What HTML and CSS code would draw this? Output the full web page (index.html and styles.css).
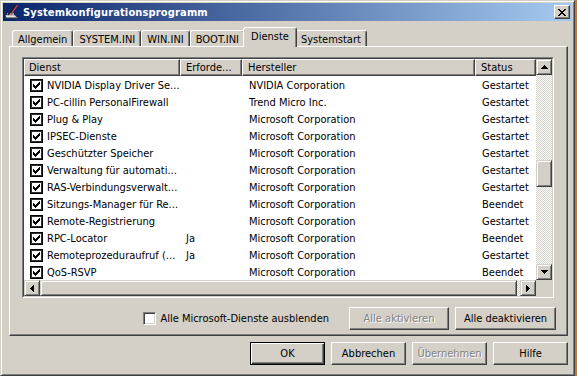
FILE: index.html
```html
<!DOCTYPE html>
<html lang="de">
<head>
<meta charset="utf-8">
<title>Systemkonfigurationsprogramm</title>
<link rel="stylesheet" href="styles.css">
</head>
<body>
<div class="page">
  <div class="window">
    <div class="caption">
      <svg class="appicon" viewBox="0 0 16 16" width="16" height="16">
        <path d="M1 11h10l3 3H2z" fill="#c8c8c8" stroke="#404040" stroke-width="1"/>
        <path d="M3 9h7v2H3z" fill="#9a9a9a"/>
        <path d="M4 11L11 1" stroke="#202020" stroke-width="1.6"/>
        <path d="M6.5 11L13.5 1" stroke="#e83a5a" stroke-width="1.2"/>
        <path d="M2 12h9" stroke="#fff" stroke-width="1"/>
      </svg>
      <span class="title">Systemkonfigurationsprogramm</span>
      <div class="capbtn">
        <svg class="px" viewBox="0 0 8 7" width="8" height="7"><path d="M0 0h2v1h-2zM6 0h2v1h-2zM1 1h2v1h-2zM5 1h2v1h-2zM2 2h4v1h-4zM3 3h2v1h-2zM2 4h4v1h-4zM1 5h2v1h-2zM5 5h2v1h-2zM0 6h2v1h-2zM6 6h2v1h-2z"/></svg>
      </div>
    </div>
    <div class="content">
      <div class="tabs">
        <div class="tab">Allgemein</div>
        <div class="tab">SYSTEM.INI</div>
        <div class="tab">WIN.INI</div>
        <div class="tab">BOOT.INI</div>
        <div class="tab active">Dienste</div>
        <div class="tab">Systemstart</div>
      </div>
      <div class="panel">
        <div class="listbox">
          <div class="listbox-inner">
            <div class="listgrid">
              <div class="table">
                <div class="thead">
                  <div class="th c1">Dienst</div>
                  <div class="th c2">Erforde...</div>
                  <div class="th c3">Hersteller</div>
                  <div class="th c4">Status</div>
                </div>
                <div class="row"><div class="td c1"><span class="lchk"><svg class="px" viewBox="0 0 7 7" width="7" height="7"><path d="M6 0h1v1h-1zM5 1h2v1h-2zM0 2h1v1h-1zM4 2h3v1h-3zM0 3h2v1h-2zM3 3h3v1h-3zM0 4h5v1h-5zM1 5h3v1h-3zM2 6h1v1h-1z"/></svg></span>NVIDIA Display Driver Se...</div><div class="td c2"></div><div class="td c3">NVIDIA Corporation</div><div class="td c4">Gestartet</div></div>
                <div class="row"><div class="td c1"><span class="lchk"><svg class="px" viewBox="0 0 7 7" width="7" height="7"><path d="M6 0h1v1h-1zM5 1h2v1h-2zM0 2h1v1h-1zM4 2h3v1h-3zM0 3h2v1h-2zM3 3h3v1h-3zM0 4h5v1h-5zM1 5h3v1h-3zM2 6h1v1h-1z"/></svg></span>PC-cillin PersonalFirewall</div><div class="td c2"></div><div class="td c3">Trend Micro Inc.</div><div class="td c4">Gestartet</div></div>
                <div class="row"><div class="td c1"><span class="lchk"><svg class="px" viewBox="0 0 7 7" width="7" height="7"><path d="M6 0h1v1h-1zM5 1h2v1h-2zM0 2h1v1h-1zM4 2h3v1h-3zM0 3h2v1h-2zM3 3h3v1h-3zM0 4h5v1h-5zM1 5h3v1h-3zM2 6h1v1h-1z"/></svg></span>Plug &amp; Play</div><div class="td c2"></div><div class="td c3">Microsoft Corporation</div><div class="td c4">Gestartet</div></div>
                <div class="row"><div class="td c1"><span class="lchk"><svg class="px" viewBox="0 0 7 7" width="7" height="7"><path d="M6 0h1v1h-1zM5 1h2v1h-2zM0 2h1v1h-1zM4 2h3v1h-3zM0 3h2v1h-2zM3 3h3v1h-3zM0 4h5v1h-5zM1 5h3v1h-3zM2 6h1v1h-1z"/></svg></span>IPSEC-Dienste</div><div class="td c2"></div><div class="td c3">Microsoft Corporation</div><div class="td c4">Gestartet</div></div>
                <div class="row"><div class="td c1"><span class="lchk"><svg class="px" viewBox="0 0 7 7" width="7" height="7"><path d="M6 0h1v1h-1zM5 1h2v1h-2zM0 2h1v1h-1zM4 2h3v1h-3zM0 3h2v1h-2zM3 3h3v1h-3zM0 4h5v1h-5zM1 5h3v1h-3zM2 6h1v1h-1z"/></svg></span>Geschützter Speicher</div><div class="td c2"></div><div class="td c3">Microsoft Corporation</div><div class="td c4">Gestartet</div></div>
                <div class="row"><div class="td c1"><span class="lchk"><svg class="px" viewBox="0 0 7 7" width="7" height="7"><path d="M6 0h1v1h-1zM5 1h2v1h-2zM0 2h1v1h-1zM4 2h3v1h-3zM0 3h2v1h-2zM3 3h3v1h-3zM0 4h5v1h-5zM1 5h3v1h-3zM2 6h1v1h-1z"/></svg></span>Verwaltung für automati...</div><div class="td c2"></div><div class="td c3">Microsoft Corporation</div><div class="td c4">Gestartet</div></div>
                <div class="row"><div class="td c1"><span class="lchk"><svg class="px" viewBox="0 0 7 7" width="7" height="7"><path d="M6 0h1v1h-1zM5 1h2v1h-2zM0 2h1v1h-1zM4 2h3v1h-3zM0 3h2v1h-2zM3 3h3v1h-3zM0 4h5v1h-5zM1 5h3v1h-3zM2 6h1v1h-1z"/></svg></span>RAS-Verbindungsverwalt...</div><div class="td c2"></div><div class="td c3">Microsoft Corporation</div><div class="td c4">Gestartet</div></div>
                <div class="row"><div class="td c1"><span class="lchk"><svg class="px" viewBox="0 0 7 7" width="7" height="7"><path d="M6 0h1v1h-1zM5 1h2v1h-2zM0 2h1v1h-1zM4 2h3v1h-3zM0 3h2v1h-2zM3 3h3v1h-3zM0 4h5v1h-5zM1 5h3v1h-3zM2 6h1v1h-1z"/></svg></span>Sitzungs-Manager für Re...</div><div class="td c2"></div><div class="td c3">Microsoft Corporation</div><div class="td c4">Beendet</div></div>
                <div class="row"><div class="td c1"><span class="lchk"><svg class="px" viewBox="0 0 7 7" width="7" height="7"><path d="M6 0h1v1h-1zM5 1h2v1h-2zM0 2h1v1h-1zM4 2h3v1h-3zM0 3h2v1h-2zM3 3h3v1h-3zM0 4h5v1h-5zM1 5h3v1h-3zM2 6h1v1h-1z"/></svg></span>Remote-Registrierung</div><div class="td c2"></div><div class="td c3">Microsoft Corporation</div><div class="td c4">Gestartet</div></div>
                <div class="row"><div class="td c1"><span class="lchk"><svg class="px" viewBox="0 0 7 7" width="7" height="7"><path d="M6 0h1v1h-1zM5 1h2v1h-2zM0 2h1v1h-1zM4 2h3v1h-3zM0 3h2v1h-2zM3 3h3v1h-3zM0 4h5v1h-5zM1 5h3v1h-3zM2 6h1v1h-1z"/></svg></span>RPC-Locator</div><div class="td c2">Ja</div><div class="td c3">Microsoft Corporation</div><div class="td c4">Beendet</div></div>
                <div class="row"><div class="td c1"><span class="lchk"><svg class="px" viewBox="0 0 7 7" width="7" height="7"><path d="M6 0h1v1h-1zM5 1h2v1h-2zM0 2h1v1h-1zM4 2h3v1h-3zM0 3h2v1h-2zM3 3h3v1h-3zM0 4h5v1h-5zM1 5h3v1h-3zM2 6h1v1h-1z"/></svg></span>Remoteprozeduraufruf (...</div><div class="td c2">Ja</div><div class="td c3">Microsoft Corporation</div><div class="td c4">Gestartet</div></div>
                <div class="row"><div class="td c1"><span class="lchk"><svg class="px" viewBox="0 0 7 7" width="7" height="7"><path d="M6 0h1v1h-1zM5 1h2v1h-2zM0 2h1v1h-1zM4 2h3v1h-3zM0 3h2v1h-2zM3 3h3v1h-3zM0 4h5v1h-5zM1 5h3v1h-3zM2 6h1v1h-1z"/></svg></span>QoS-RSVP</div><div class="td c2"></div><div class="td c3">Microsoft Corporation</div><div class="td c4">Beendet</div></div>
              </div>
              <div class="vscroll">
                <div class="sbtn"><svg class="px" viewBox="0 0 7 4" width="7" height="4"><path d="M3 0h1v1h-1zM2 1h3v1h-3zM1 2h5v1h-5zM0 3h7v1h-7z"/></svg></div>
                <div class="track v1"></div>
                <div class="thumb vthumb"></div>
                <div class="track v2"></div>
                <div class="sbtn"><svg class="px" viewBox="0 0 7 4" width="7" height="4"><path d="M0 0h7v1h-7zM1 1h5v1h-5zM2 2h3v1h-3zM3 3h1v1h-1z"/></svg></div>
              </div>
              <div class="hscroll">
                <div class="sbtn"><svg class="px" viewBox="0 0 4 7" width="4" height="7"><path d="M3 0h1v7h-1zM2 1h1v5h-1zM1 2h1v3h-1zM0 3h1v1h-1z"/></svg></div>
                <div class="thumb hthumb"></div>
                <div class="track h1"></div>
                <div class="sbtn"><svg class="px" viewBox="0 0 4 7" width="4" height="7"><path d="M0 0h1v7h-1zM1 1h1v5h-1zM2 2h1v3h-1zM3 3h1v1h-1z"/></svg></div>
              </div>
              <div class="corner"></div>
            </div>
          </div>
        </div>
        <div class="options">
          <div class="optchk"><span class="cbox"></span><span>Alle Microsoft-Dienste ausblenden</span></div>
          <div class="btn wide disabled">Alle aktivieren</div>
          <div class="btn wide wide2">Alle deaktivieren</div>
        </div>
      </div>
      <div class="footer">
        <div class="btn dlg default">OK</div>
        <div class="btn dlg">Abbrechen</div>
        <div class="btn dlg disabled">Übernehmen</div>
        <div class="btn dlg">Hilfe</div>
      </div>
    </div>
  </div>
  <div class="desk"></div>
</div>
</body>
</html>
```

FILE: styles.css
```css
* { box-sizing: border-box; }
html, body { margin: 0; padding: 0; background: #fff; }
body {
  font-family: "DejaVu Sans Condensed", "Liberation Sans", sans-serif;
  font-size: 11px;
  color: #000;
}
.px { shape-rendering: crispEdges; fill: #000; display: block; }

.page { display: flex; width: 577px; }
.window {
  width: 575px;
  height: 376px;
  background: #d4d0c8;
  border: 1px solid;
  border-color: #d4d0c8 #404040 #404040 #d4d0c8;
  box-shadow: inset 1px 1px #fff, inset -1px -1px #808080;
  padding: 2px;
  display: flex;
  flex-direction: column;
}
.desk { width: 2px; height: 376px; background: #c8743c; }

.caption {
  flex: none;
  height: 18px;
  display: flex;
  align-items: center;
  padding: 0 2px 0 1px;
  background: linear-gradient(90deg, #0a246a, #a6caf0);
}
.appicon { flex: none; display: block; }
.title {
  flex: 1;
  margin-left: 3px;
  color: #fff;
  font-weight: bold;
  letter-spacing: 0.15px;
  white-space: nowrap;
}
.capbtn {
  flex: none;
  width: 16px;
  height: 14px;
  background: #d4d0c8;
  border: 1px solid;
  border-color: #fff #404040 #404040 #fff;
  box-shadow: inset -1px -1px #808080;
  display: flex;
  align-items: center;
  justify-content: center;
}

.content {
  flex: 1;
  display: flex;
  flex-direction: column;
  padding: 6px 4px 0 6px;
}

.tabs {
  flex: none;
  height: 20px;
  margin-bottom: -1px;
  padding-left: 3px;
  display: flex;
  align-items: flex-end;
}
.tab {
  height: 16px;
  margin-bottom: 1px;
  padding: 2px 5px 0 5px;
  line-height: 13px;
  white-space: nowrap;
  background: #d4d0c8;
  border: 1px solid;
  border-bottom: none;
  border-color: #fff #404040 transparent #fff;
  box-shadow: inset -1px 0 #808080;
  border-radius: 3px 3px 0 0;
}
.tab.active {
  height: 20px;
  margin: 0 -2px;
  padding: 2px 7px 0 7px;
  position: relative;
  z-index: 1;
}

.panel {
  flex: none;
  height: 290px;
  border: 1px solid;
  border-color: #fff #404040 #404040 #fff;
  box-shadow: inset -1px -1px #808080;
  padding: 10px 11px 3px 12px;
  display: flex;
  flex-direction: column;
}

.listbox {
  width: 532px;
  height: 241px;
  border: 1px solid;
  border-color: #808080 #fff #fff #808080;
}
.listbox-inner {
  height: 100%;
  border: 1px solid;
  border-color: #404040 #d4d0c8 #d4d0c8 #404040;
  background: #fff;
}
.listgrid {
  display: grid;
  grid-template-columns: 512px 16px;
  grid-template-rows: 221px 16px;
}
.table { background: #fff; }
.thead { display: flex; height: 17px; }
.th {
  height: 17px;
  padding-top: 1px;
  line-height: 14px;
  background: #d4d0c8;
  border: 1px solid;
  border-color: #fff #404040 #404040 #fff;
  box-shadow: inset -1px -1px #808080;
  padding-left: 5px;
  white-space: nowrap;
  overflow: hidden;
}
.th.c1 { padding-left: 4px; }
.c1 { width: 156px; }
.c2 { width: 62px; }
.c3 { width: 233px; }
.c4 { width: 61px; }
.row { display: flex; height: 17px; align-items: stretch; }
.td {
  white-space: nowrap;
  overflow: hidden;
  padding-left: 6px;
  padding-top: 2px;
  line-height: 15px;
}
.td.c3, .td.c4 { padding-left: 7px; }
.td.c1 { display: flex; align-items: center; gap: 4px; padding-top: 1px; }
.lchk {
  flex: none;
  width: 13px;
  height: 13px;
  border: 1px solid #000;
  box-shadow: inset 1px 1px #303030, inset -1px -1px #303030;
  background: #fff;
  display: flex;
  align-items: center;
  justify-content: center;
}
.td.c1 .lchk + * { }

.vscroll { display: flex; flex-direction: column; }
.hscroll { display: flex; }
.sbtn {
  flex: none;
  width: 16px;
  height: 16px;
  background: #d4d0c8;
  border: 1px solid;
  border-color: #d4d0c8 #404040 #404040 #d4d0c8;
  box-shadow: inset 1px 1px #fff, inset -1px -1px #808080;
  display: flex;
  align-items: center;
  justify-content: center;
}
.track {
  background: repeating-conic-gradient(#d4d0c8 0 25%, #fff 0 50%) 0 0 / 2px 2px;
}
.thumb {
  background: #d4d0c8;
  border: 1px solid;
  border-color: #d4d0c8 #404040 #404040 #d4d0c8;
  box-shadow: inset 1px 1px #fff, inset -1px -1px #808080;
}
.v1 { height: 85px; }
.vthumb { height: 27px; }
.v2 { flex: 1; }
.hthumb { width: 477px; }
.h1 { flex: 1; }
.corner { background: #d4d0c8; }

.options {
  margin-top: 9px;
  height: 23px;
  display: flex;
  align-items: center;
  justify-content: flex-end;
  gap: 6px;
}
.optchk {
  display: flex;
  align-items: center;
  gap: 4px;
  margin-right: 14px;
  white-space: nowrap;
}
.cbox {
  width: 13px;
  height: 13px;
  background: #fff;
  border: 1px solid;
  border-color: #808080 #fff #fff #808080;
  box-shadow: inset 1px 1px #404040, inset -1px -1px #d4d0c8;
}

.btn {
  height: 23px;
  display: flex;
  align-items: center;
  justify-content: center;
  white-space: nowrap;
  background: #d4d0c8;
  border: 1px solid;
  border-color: #fff #404040 #404040 #fff;
  box-shadow: inset -1px -1px #808080;
}
.btn.wide { width: 100px; }
.btn.wide2 { width: 101px; }
.btn.dlg { width: 75px; }
.btn.default {
  border-color: #000;
  box-shadow: inset 1px 1px #fff, inset -1px -1px #404040, inset -2px -2px #808080;
}
.btn.disabled { color: #808080; text-shadow: 1px 1px #fff; }

.footer {
  margin-top: 6px;
  display: flex;
  justify-content: flex-end;
  gap: 6px;
}
```
